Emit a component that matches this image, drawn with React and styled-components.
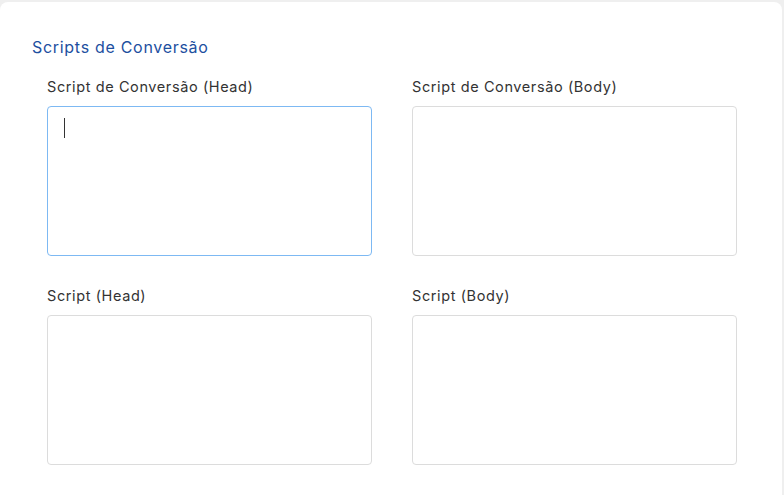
import React from "react";
import styled, { createGlobalStyle } from "styled-components";

const Global = createGlobalStyle`
  html, body { margin: 0; padding: 0; background: #efefef; }
  body { font-family: Inter, "Open Sans", sans-serif; overflow: hidden; }
`;

const Card = styled.section`
  margin: 2px 2px 0 0;
  background: #fff;
  border-radius: 8px 8px 0 0;
  padding: 35px 45px 40px 32px;
  min-height: 460px;
  box-sizing: border-box;
`;

const Title = styled.h2`
  margin: 0 0 20px;
  font-size: 16px;
  line-height: 20px;
  font-weight: 400;
  letter-spacing: 0.7px;
  color: #1d4f9f;
`;

const Grid = styled.div`
  margin-left: 15px;
  display: grid;
  grid-template-columns: 325px 325px;
  column-gap: 40px;
  row-gap: 30px;
`;

const Field = styled.div`
  display: flex;
  flex-direction: column;
  position: relative;
`;

const Label = styled.label`
  font-size: 14.5px;
  line-height: 20px;
  letter-spacing: 0.6px;
  color: #333;
  margin-bottom: 9px;
`;

const Area = styled.textarea`
  box-sizing: border-box;
  width: 325px;
  height: 150px;
  resize: none;
  border: 1px solid ${(p) => (p.$focused ? "#7db9f3" : "#dcdcdc")};
  border-radius: 4px;
  padding: 12px 16px;
  font-family: inherit;
  font-size: 14px;
  outline: none;
  background: #fff;
`;

const Caret = styled.span`
  position: absolute;
  left: 17px;
  top: 41px;
  width: 1px;
  height: 20px;
  background: #333;
`;

const fields = [
  { label: "Script de Conversão (Head)", focused: true },
  { label: "Script de Conversão (Body)" },
  { label: "Script (Head)" },
  { label: "Script (Body)" },
];

export default function App() {
  return (
    <>
      <Global />
      <Card>
        <Title>Scripts de Conversão</Title>
        <Grid>
          {fields.map((f) => (
            <Field key={f.label}>
              <Label>{f.label}</Label>
              <Area $focused={f.focused} />
              {f.focused && <Caret />}
            </Field>
          ))}
        </Grid>
      </Card>
    </>
  );
}
